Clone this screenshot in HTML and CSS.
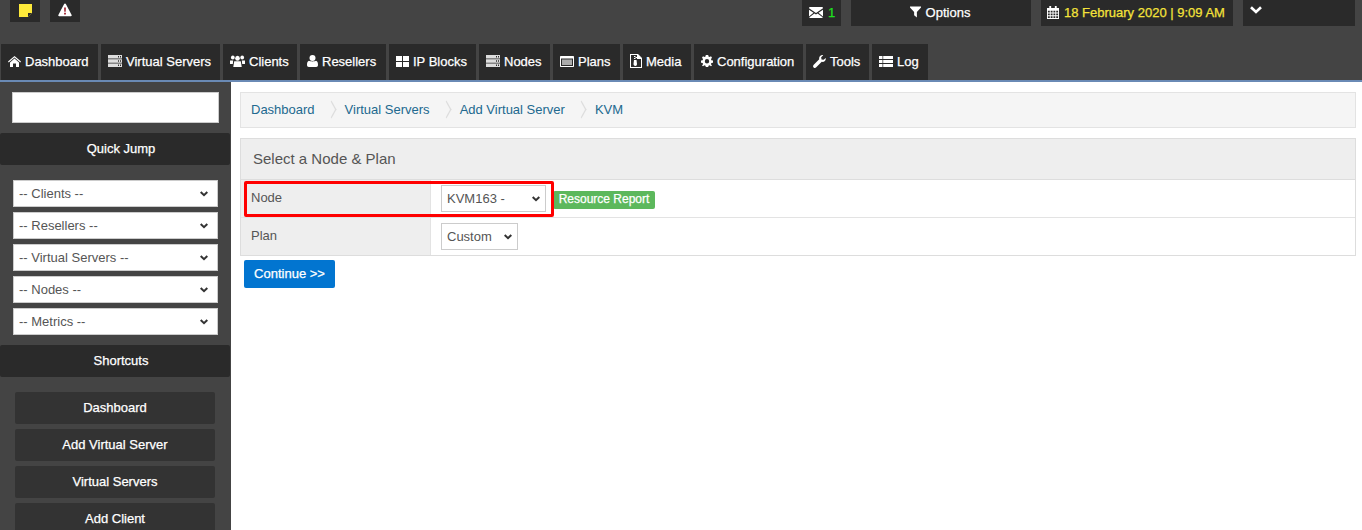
FILE: index.html
```html
<!DOCTYPE html>
<html lang="en">
<head>
  <meta charset="UTF-8" />
  <title>Add Virtual Server</title>
  <link rel="stylesheet" href="styles.css">
</head>
<body>
  <header class="top">
    <div class="top-row">
      <div class="top-left">
        <a class="top-btn btn-note">
          <svg class="ico" viewBox="0 0 13 13" width="13" height="13"><path fill="#fde93a" d="M0 0h13v9l-4 4H0z"/><path fill="#2a2a2a" d="M9 13V9h4z"/></svg>
        </a>
        <a class="top-btn btn-note">
          <svg class="ico" viewBox="0 0 16 16" width="16" height="14"><path fill="#fff" d="M8 0.5c.5 0 .8.3 1 .7l6.6 12.4c.3.6-.1 1.4-.9 1.4H1.3c-.8 0-1.2-.8-.9-1.4L7 1.2c.2-.4.5-.7 1-.7z"/><path fill="#9c1c2a" d="M7 5h2l-.2 5H7.200zM7 11h2v2H7z"/></svg>
        </a>
      </div>
      <div class="top-right">
        <a class="top-btn btn-mail">
          <svg class="ico" viewBox="0 0 14 11" width="14" height="11"><path fill="#fff" d="M0 1.200C0 .5.500 0 1.200 0h11.600C13.500 0 14 .5 14 1.200L7 6zM0 2.800l4.500 3L0 9.500zM14 2.800l-4.500 3 4.500 3.700zM5.400 6.500L7 7.600l1.600-1.100 5.300 4c-.2.300-.6.500-1.100.5H1.200c-.5 0-.9-.2-1.100-.5z"/></svg>
          <span class="mail-count">1</span>
        </a>
        <a class="top-btn btn-options">
          <svg class="ico" viewBox="0 0 12 12" width="11" height="12"><path fill="#fff" d="M0 0h12v1L7.500 6v6l-3-2.500V6L0 1z"/></svg>
          Options
        </a>
        <a class="top-btn btn-date">
          <svg class="ico" viewBox="0 0 13 14" width="12" height="13"><path fill="#fff" fill-rule="evenodd" d="M0 2h2.500V0h2v2h4V0h2v2H13v12H0zM1 5v2h2V5zm3 0v2h2V5zm3 0v2h2V5zm3 0v2h2V5zM1 8v2h2V8zm3 0v2h2V8zm3 0v2h2V8zm3 0v2h2V8zM1 11v2h2v-2zm3 0v2h2v-2zm3 0v2h2v-2zm3 0v2h2v-2z"/></svg>
          18 February 2020 | 9:09 AM
        </a>
        <a class="top-btn btn-more">
          <svg class="ico" viewBox="0 0 12 8" width="12" height="8"><path fill="none" stroke="#fff" stroke-width="2.600" d="M1 1.200l5 4.800 5-4.800"/></svg>
        </a>
      </div>
    </div>
    <nav class="tabs">
      <a class="tab tab-dash"><svg class="ico" viewBox="0 0 13 11" width="13" height="11"><path fill="#fff" d="M6.500 0L13 5.600l-.7.800-5.800-5-5.800 5-.7-.8zM6.500 2.600L11 6.400V11H8V7.500H5V11H2V6.400z"/></svg>Dashboard</a>
      <a class="tab tab-servers"><svg class="ico" viewBox="0 0 14 12" width="14" height="12"><path fill="#ddd" fill-rule="evenodd" d="M0 0h14v3.500H0zM0 4.200h14v3.500H0zM0 8.400h14V12H0zM10 1v1.500h1V1zm2 0v1.500h1V1zM10 5.200v1.500h1V5.200zm2 0v1.500h1V5.200zM10 9.400v1.500h1V9.400zm2 0v1.500h1V9.400z"/></svg>Virtual Servers</a>
      <a class="tab tab-clients"><svg class="ico" viewBox="0 0 16 12" width="15" height="12" preserveAspectRatio="none"><g fill="#fff"><circle cx="3" cy="2.400" r="2"/><circle cx="13" cy="2.400" r="2"/><circle cx="8" cy="3.300" r="2.500"/><path d="M0 5.400h3.400L3 9H0zM16 5.400h-3.400L13 9h3zM4.500 6.200h7L12.500 12h-9z"/></g></svg>Clients</a>
      <a class="tab tab-resellers"><svg class="ico" viewBox="0 0 11 12" width="11" height="12"><g fill="#fff"><circle cx="5.500" cy="3" r="3"/><path d="M2 5.800c1 .8 6 .8 7 0 1.300.3 2 1.700 2 4.200 0 1.200-.7 2-1.800 2H1.800C.7 12 0 11.200 0 10c0-2.500.7-3.900 2-4.200z"/></g></svg>Resellers</a>
      <a class="tab tab-ip"><svg class="ico" viewBox="0 0 13 11" width="13" height="11"><path fill="#fff" d="M0 0h6v5H0zM7 0h6v5H7zM0 6h6v5H0zM7 6h6v5H7z"/></svg>IP Blocks</a>
      <a class="tab tab-nodes"><svg class="ico" viewBox="0 0 14 12" width="14" height="12"><path fill="#ddd" fill-rule="evenodd" d="M0 0h14v3.500H0zM0 4.200h14v3.500H0zM0 8.400h14V12H0zM10 1v1.500h1V1zm2 0v1.500h1V1zM10 5.200v1.500h1V5.200zm2 0v1.500h1V5.200zM10 9.400v1.500h1V9.400zm2 0v1.500h1V9.400z"/></svg>Nodes</a>
      <a class="tab tab-plans"><svg class="ico" viewBox="0 0 14 11" width="14" height="11"><path fill="#fff" fill-rule="evenodd" d="M1 0h12c.6 0 1 .4 1 1v9c0 .6-.4 1-1 1H1c-.6 0-1-.4-1-1V1c0-.6.4-1 1-1zM1 2.500V10h12V2.500z"/><path fill="#aaa" d="M2 3.500h10V9H2z"/></svg>Plans</a>
      <a class="tab tab-media"><svg class="ico" viewBox="0 0 12 14" width="12" height="14"><path fill="#fff" fill-rule="evenodd" d="M0 0h8l4 4v10H0zM1 1v12h10V5H7V1zM4 2h1.500v1H4zM5.500 3H7v1H5.500zM4 4h1.500v1H4zM4 6h2.500l.5 4c0 1-.7 2-1.600 2S3.500 11 3.500 10z"/></svg>Media</a>
      <a class="tab tab-config"><svg class="ico" viewBox="0 0 12 12" width="12" height="12"><path fill="#fff" fill-rule="evenodd" d="M4.800 0h2.400l.3 1.600 1.100.5L10 1.200 11 2.800l-1 1.300.3 1.100 1.700.3V7.800l-1.700.3-.3 1.100 1 1.300L10 11.200l-1.400-.9-1.100.5L7.200 12H4.800l-.3-1.200-1.100-.5-1.400.9L1 10.500l1-1.300-.3-1.100L0 7.800V5.500l1.700-.3L2 4.100 1 2.800l1-1.600 1.400.9 1.100-.5zM6 4a2.200 2.200 0 1 0 0 4.400A2.200 2.200 0 0 0 6 4z"/></svg>Configuration</a>
      <a class="tab tab-tools"><svg class="ico" viewBox="0 0 14 14" width="13" height="13"><path fill="#fff" d="M13.700 3.200c.5 2.400-1.500 4.800-4.300 4.200L3.500 13.300c-.8.900-2 .9-2.800.1-.9-.8-.8-2 .1-2.800L6.700 4.700C6 2 8.500-.4 11 .2L8.800 2.500l.4 2.300 2.200.4z"/></svg>Tools</a>
      <a class="tab tab-log"><svg class="ico" viewBox="0 0 14 11" width="14" height="11"><path fill="#fff" d="M0 0h3.500v3H0zM4.200 0H14v3H4.200zM0 4h3.500v3H0zM4.200 4H14v3H4.200zM0 8h3.500v3H0zM4.200 8H14v3H4.200z"/></svg>Log</a>
    </nav>
  </header>

  <div class="layout">
    <aside class="sidebar">
      <input class="search" type="text" />
      <h3 class="side-title">Quick Jump</h3>
      <div class="jump-list">
        <select class="jump"><option>-- Clients --</option></select>
        <select class="jump"><option>-- Resellers --</option></select>
        <select class="jump"><option>-- Virtual Servers --</option></select>
        <select class="jump"><option>-- Nodes --</option></select>
        <select class="jump"><option>-- Metrics --</option></select>
      </div>
      <h3 class="side-title">Shortcuts</h3>
      <div class="shortcut-list">
        <a class="shortcut">Dashboard</a>
        <a class="shortcut">Add Virtual Server</a>
        <a class="shortcut">Virtual Servers</a>
        <a class="shortcut">Add Client</a>
      </div>
    </aside>

    <main class="content">
      <ul class="crumbs">
        <li><a>Dashboard</a></li>
        <li><a>Virtual Servers</a></li>
        <li><a>Add Virtual Server</a></li>
        <li><a>KVM</a></li>
      </ul>

      <section class="panel">
        <h2 class="panel-title">Select a Node &amp; Plan</h2>
        <div class="form-row">
          <div class="form-label">Node</div>
          <div class="form-field">
            <select class="pick pick-node"><option>KVM163 -</option></select>
            <a class="badge">Resource Report</a>
          </div>
        </div>
        <div class="form-row">
          <div class="form-label">Plan</div>
          <div class="form-field">
            <select class="pick pick-plan"><option>Custom</option></select>
          </div>
        </div>
        <div class="highlight"></div>
      </section>
      <button class="continue" type="button">Continue &gt;&gt;</button>
    </main>
  </div>
</body>
</html>
```

FILE: styles.css
```css
/* Base */
html, body {
  height: 530px;
  overflow: hidden;
}

body {
  margin: 0;
  font-family: "Liberation Sans", Arial, sans-serif;
  font-size: 13px;
  color: #444;
  background-color: #fff;
}

.ico {
  flex: none;
}

/* White text on dark sits heavier in the original */
.top-btn, .tab, .side-title, .shortcut, .badge, .continue {
  -webkit-text-stroke: 0.25px;
}

/* Top bar */
.top {
  height: 80px;
  background-color: #444;
  border-bottom: 2px solid #6a8ab5;
  display: flex;
  flex-direction: column;
  justify-content: space-between;
}

.top-row {
  display: flex;
  justify-content: space-between;
  align-items: flex-start;
  padding: 0 7px 0 10px;
}

.top-left, .top-right {
  display: flex;
  gap: 10px;
}

.top-btn {
  display: flex;
  align-items: center;
  justify-content: center;
  gap: 5px;
  height: 26px;
  padding-bottom: 2px;
  box-sizing: border-box;
  background-color: #2a2a2a;
  color: #fff;
}

.btn-note {
  width: 30px;
  height: 22px;
}

.btn-mail {
  width: 39px;
  padding-left: 1px;
}

.mail-count {
  color: #1fe01f;
}

.btn-options {
  width: 180px;
  padding-right: 2px;
}

.btn-date {
  width: 192px;
  padding-right: 2px;
  color: #f5e33a;
}

.btn-more {
  width: 112px;
  justify-content: flex-start;
  align-items: flex-start;
  padding: 6px 0 0 7px;
}

/* Tabs */
.tabs {
  display: flex;
  gap: 3px;
  padding-left: 1px;
}

.tab {
  display: flex;
  align-items: center;
  gap: 4px;
  height: 36px;
  padding: 0 0 2px 7px;
  box-sizing: border-box;
  background-color: #2a2a2a;
  color: #fff;
}

.tab-dash { width: 97px; }
.tab-servers { width: 119px; }
.tab-clients { width: 74px; }
.tab-resellers { width: 86px; }
.tab-ip { width: 87px; }
.tab-nodes { width: 71px; }
.tab-plans { width: 67px; }
.tab-media { width: 68px; }
.tab-config { width: 109px; }
.tab-tools { width: 63px; }
.tab-log { width: 56px; }

/* Page columns */
.layout {
  display: flex;
}

.sidebar {
  width: 231px;
  height: 448px;
  flex: none;
  background-color: #444;
  padding-top: 10px;
  box-sizing: border-box;
  overflow: hidden;
}

.search {
  display: block;
  width: 207px;
  height: 31px;
  margin: 0 0 10px 12px;
  padding: 0;
  box-sizing: border-box;
  border: 1px solid #ccc;
  background-color: #fff;
}

.side-title {
  margin: 0;
  width: 230px;
  height: 32px;
  line-height: 32px;
  padding-left: 12px;
  box-sizing: border-box;
  text-align: center;
  font-size: 13px;
  font-weight: normal;
  color: #fff;
  background-color: #2a2a2a;
  border-radius: 2px;
}

.jump-list {
  display: flex;
  flex-direction: column;
  gap: 5px;
  padding: 15px 0 10px 13px;
}

.jump, .pick {
  height: 27px;
  box-sizing: border-box;
  border: 1px solid #ccc;
  border-radius: 0;
  color: #555;
  font-family: inherit;
  font-size: 13px;
  padding: 0 0 1px 5px;
  appearance: none;
  background-color: #fff;
  background-image: url("data:image/svg+xml,%3Csvg xmlns='http://www.w3.org/2000/svg' width='8' height='6'%3E%3Cpath fill='none' stroke='%23333' stroke-width='2' d='M.7 1l3.300 3.200L7.300 1'/%3E%3C/svg%3E");
  background-repeat: no-repeat;
}

.jump {
  width: 205px;
  background-position: right 9px center;
}

.shortcut-list {
  display: flex;
  flex-direction: column;
  gap: 5px;
  padding: 15px 0 0 15px;
}

.shortcut {
  width: 200px;
  height: 32px;
  flex: none;
  line-height: 32px;
  text-align: center;
  color: #fff;
  background-color: #333;
  border-radius: 2px;
}

/* Main content */
.content {
  flex: 1;
  padding: 10px 6px 0 9px;
  min-width: 0;
}

.crumbs {
  display: flex;
  align-items: center;
  height: 36px;
  margin: 0 0 10px;
  padding: 0 10px 1px;
  list-style: none;
  background-color: #f5f5f5;
  border: 1px solid #e3e3e3;
  box-sizing: border-box;
}

.crumbs a {
  color: #22698f;
}

.crumbs li + li {
  display: flex;
  align-items: center;
}

.crumbs li + li::before {
  content: "";
  width: 6px;
  height: 6px;
  margin: 0 10px 0 13px;
  border-top: 1px solid #ddd;
  border-right: 1px solid #ddd;
  transform: scaleY(1.8) rotate(45deg);
}

.panel {
  position: relative;
  border: 1px solid #ddd;
  background-color: #fff;
}

.panel-title {
  margin: 0;
  height: 40px;
  line-height: 39px;
  padding-left: 12px;
  font-size: 15px;
  font-weight: normal;
  color: #555;
  background-color: #eee;
  border-bottom: 1px solid #ddd;
}

.form-row {
  display: flex;
  height: 37px;
  border-bottom: 1px solid #e3e3e3;
}

.form-row + .form-row {
  border-bottom: none;
}

.form-label {
  width: 190px;
  flex: none;
  padding: 10px 0 0 10px;
  box-sizing: border-box;
  color: #555;
  background-color: #eee;
  border-right: 1px solid #e3e3e3;
}

.form-field {
  display: flex;
  align-items: center;
  gap: 7px;
  padding-left: 10px;
}

.pick {
  background-position: right 5px center;
}

.pick-node {
  width: 105px;
}

.pick-plan {
  width: 77px;
}

.badge {
  width: 102px;
  height: 18px;
  line-height: 17px;
  text-align: center;
  box-sizing: border-box;
  font-size: 12px;
  color: #fff;
  background-color: #5cb85c;
  border-radius: 2px;
  margin-top: 2px;
}

/* Red box from the screenshot */
.highlight {
  position: absolute;
  left: 3px;
  top: 42px;
  width: 304px;
  height: 30px;
  border: 3px solid #f00;
  border-radius: 2px;
  pointer-events: none;
}

.continue {
  display: block;
  width: 91px;
  height: 28px;
  margin: 4px 0 0 4px;
  padding: 0 0 1px;
  border: none;
  border-radius: 2px;
  background-color: #0275d0;
  color: #fff;
  font-family: inherit;
  font-size: 13px;
}
```
